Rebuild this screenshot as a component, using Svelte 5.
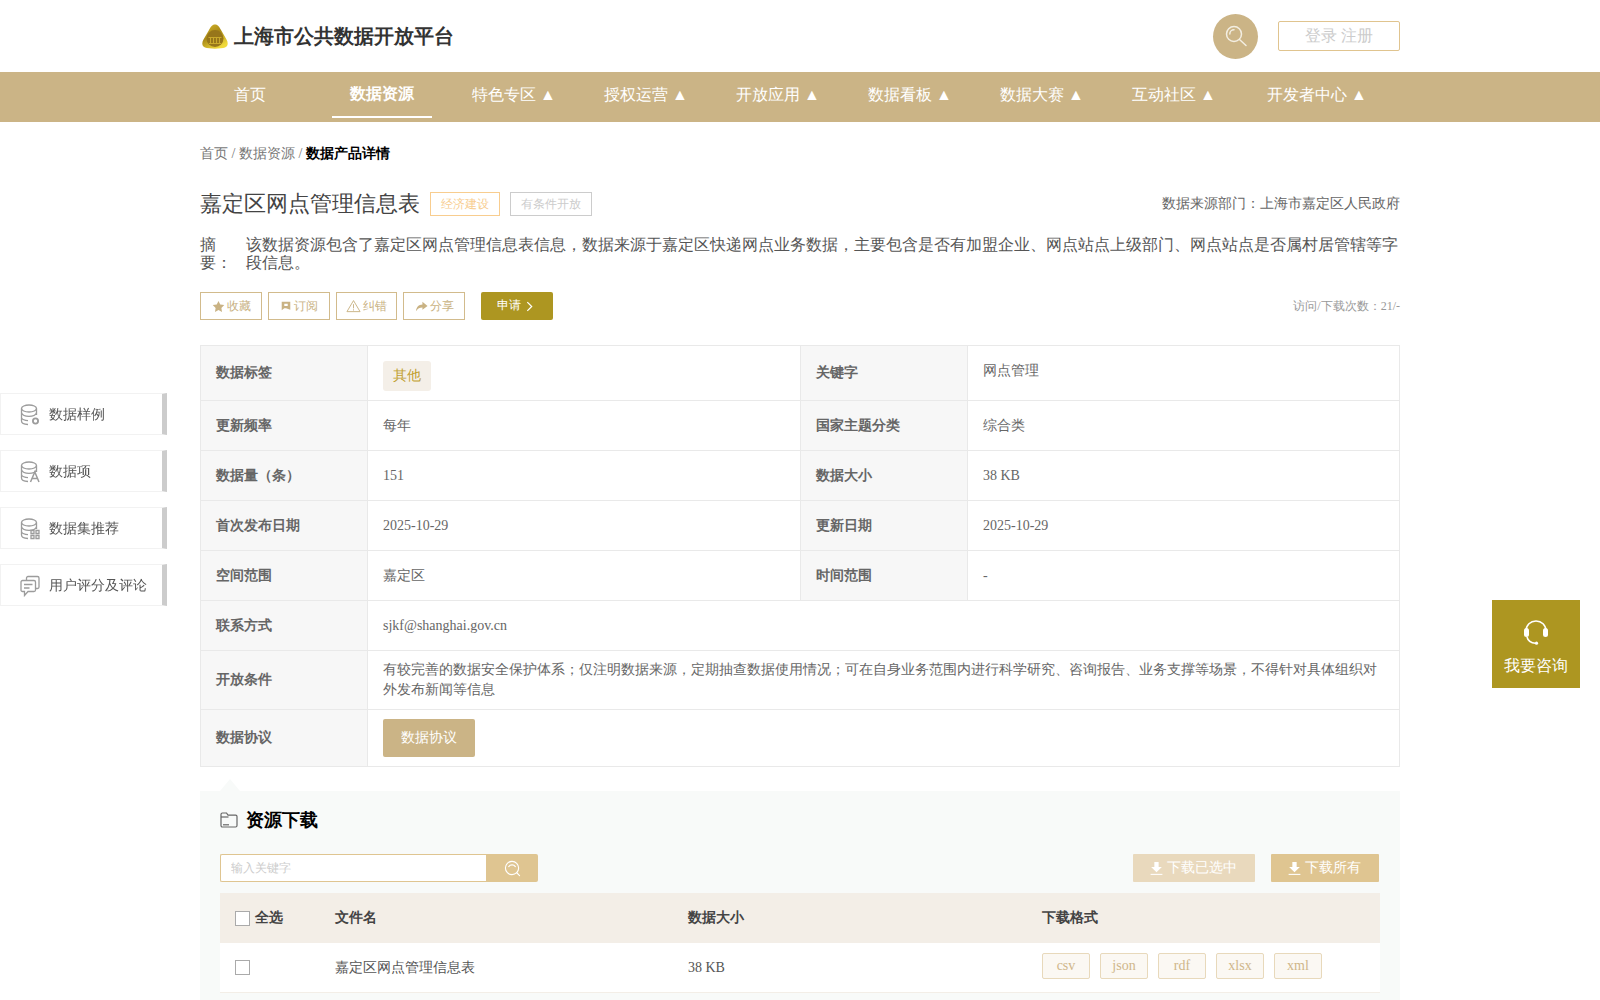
<script>
  const navItems = [
    { label: '首页' },
    { label: '数据资源', active: true },
    { label: '特色专区 ▲' },
    { label: '授权运营 ▲' },
    { label: '开放应用 ▲' },
    { label: '数据看板 ▲' },
    { label: '数据大赛 ▲' },
    { label: '互动社区 ▲' },
    { label: '开发者中心 ▲', wide: true }
  ]
  const sideItems = ['数据样例', '数据项', '数据集推荐', '用户评分及评论']
  const formats = ['csv', 'json', 'rdf', 'xlsx', 'xml']
</script>

<div class="page">
  <header class="top">
    <div class="brand">
      <svg class="logo" viewBox="0 0 26 25" width="26" height="25">
        <defs>
          <linearGradient id="rim" x1="0" y1="0" x2="0.6" y2="1">
            <stop offset="0" stop-color="#d9b92c" />
            <stop offset="0.5" stop-color="#a98a18" />
            <stop offset="1" stop-color="#f0d93a" />
          </linearGradient>
        </defs>
        <path d="M13 .5C16 .5 17.5 3 19 6L24.5 15.5C26.5 19 26 22 23 23.5C19 25 7 25 3 23.5C0 22-.5 19 1.5 15.5L7 6C8.5 3 10 .5 13 .5Z" fill="url(#rim)" />
        <circle cx="13" cy="14.5" r="8.5" fill="#97761a" />
        <path d="M6.5 13.5H19.5M7 19.5H19M8.5 14V19M11.5 14V19M14.5 14V19M17.5 14V19" fill="none" stroke="#c9a92c" stroke-width="1" />
      </svg>
      <span>上海市公共数据开放平台</span>
    </div>
    <div class="top-right">
      <div class="search-circle">
        <svg viewBox="0 0 24 24" width="24" height="24" fill="none" stroke="#f3eee2" stroke-width="1.5" stroke-linecap="round">
          <circle cx="10" cy="10" r="7.5" />
          <path d="M5.8 10A4.2 4.2 0 0 1 10 5.8" />
          <path d="M15.5 15.5L22 21.5" />
        </svg>
      </div>
      <button class="login">登录 注册</button>
    </div>
  </header>

  <nav class="nav">
    <div class="nav-inner">
      {#each navItems as item}
        <a class="nav-item" class:active={item.active} class:wide={item.wide} href="#top">{item.label}</a>
      {/each}
    </div>
  </nav>

  <main class="main">
    <div class="crumbs">首页 / 数据资源 / <b>数据产品详情</b></div>

    <div class="title-row">
      <h1>嘉定区网点管理信息表</h1>
      <span class="tag tag-orange">经济建设</span>
      <span class="tag tag-gray">有条件开放</span>
      <span class="source">数据来源部门：上海市嘉定区人民政府</span>
    </div>

    <div class="summary">
      <div class="summary-label">摘要：</div>
      <div class="summary-text">该数据资源包含了嘉定区网点管理信息表信息，数据来源于嘉定区快递网点业务数据，主要包含是否有加盟企业、网点站点上级部门、网点站点是否属村居管辖等字段信息。</div>
    </div>

    <div class="actions">
      <button class="act">
        <svg viewBox="0 0 14 14" width="13" height="13"><path d="M7 1L8.9 4.9L13.2 5.5L10.1 8.5L10.8 12.8L7 10.8L3.2 12.8L3.9 8.5L.8 5.5L5.1 4.9Z" fill="#c9b283" /></svg>
        收藏
      </button>
      <button class="act">
        <svg viewBox="0 0 14 14" width="12" height="12"><path d="M2 2H12V11.5L7 9.5H5L2 12Z M5 4.5V7H9V4.5Z" fill="#c9b283" fill-rule="evenodd" /></svg>
        订阅
      </button>
      <button class="act narrow">
        <svg viewBox="0 0 16 14" width="15" height="14" fill="none" stroke="#c9b283"><path d="M8 1.2L15 13H1Z" /><path d="M8 5V9.5M8 10.5V11.8" /></svg>纠错
      </button>
      <button class="act">
        <svg viewBox="0 0 14 14" width="13" height="13"><path d="M8 2L13.5 6.5L8 10.5V8C5 8 3 9 1 12C1.5 7.5 4 5 8 4.8Z" fill="#c9b283" /></svg>
        分享
      </button>
      <button class="apply">
        <span>申请</span>
        <svg viewBox="0 0 8 12" width="7" height="11" fill="none" stroke="#fff" stroke-width="1.4"><path d="M1.5 1L6.5 6L1.5 11" /></svg>
      </button>
      <span class="counts">访问/下载次数：21/-</span>
    </div>

    <table class="info">
      <colgroup>
        <col style="width:167px" />
        <col style="width:433px" />
        <col style="width:167px" />
        <col />
      </colgroup>
      <tbody>
        <tr class="r55">
          <th>数据标签</th>
          <td><span class="chip">其他</span></td>
          <th>关键字</th>
          <td class="kw">网点管理</td>
        </tr>
        <tr>
          <th>更新频率</th>
          <td>每年</td>
          <th>国家主题分类</th>
          <td>综合类</td>
        </tr>
        <tr>
          <th>数据量（条）</th>
          <td>151</td>
          <th>数据大小</th>
          <td>38 KB</td>
        </tr>
        <tr>
          <th>首次发布日期</th>
          <td>2025-10-29</td>
          <th>更新日期</th>
          <td>2025-10-29</td>
        </tr>
        <tr>
          <th>空间范围</th>
          <td>嘉定区</td>
          <th>时间范围</th>
          <td>-</td>
        </tr>
        <tr>
          <th>联系方式</th>
          <td colspan="3">sjkf@shanghai.gov.cn</td>
        </tr>
        <tr class="r59">
          <th>开放条件</th>
          <td colspan="3" class="cond">有较完善的数据安全保护体系；仅注明数据来源，定期抽查数据使用情况；可在自身业务范围内进行科学研究、咨询报告、业务支撑等场景，不得针对具体组织对外发布新闻等信息</td>
        </tr>
        <tr class="r57">
          <th>数据协议</th>
          <td colspan="3"><button class="protocol">数据协议</button></td>
        </tr>
      </tbody>
    </table>

    <section class="resource">
      <span class="caret"></span>
      <h2>
        <svg viewBox="0 0 18 16" width="18" height="16" fill="none" stroke="#666" stroke-width="1.2"><path d="M1 13.5V2.5C1 1.7 1.6 1 2.4 1H6.5L8 3.2H15.6C16.4 3.2 17 3.8 17 4.6V13.5C17 14.3 16.4 15 15.6 15H2.4C1.6 15 1 14.3 1 13.5Z" /><path d="M1 5H8.5" /><path d="M3 12.8H9" /></svg>
        资源下载
      </h2>

      <div class="tools">
        <div class="search">
          <input type="text" placeholder="输入关键字" />
          <button aria-label="搜索">
            <svg viewBox="0 0 18 18" width="17" height="17" fill="none" stroke="#fff" stroke-width="1.2" stroke-linecap="round"><circle cx="8.5" cy="8.5" r="7" /><path d="M5 7C5.8 5.8 7 5.2 8.5 5.2C10 5.2 11.2 5.8 12 7" /><path d="M13.5 13.5L16.5 16.5" /></svg>
          </button>
        </div>
        <div class="dl-btns">
          <button class="dl dl-off">
            <svg viewBox="0 0 12 14" width="13" height="15" fill="#fff"><path d="M4 1H8V5.5H11L6 10.5L1 5.5H4Z" /><path d="M0.5 12H11.5V13H0.5Z" /></svg>
            下载已选中
          </button>
          <button class="dl dl-on">
            <svg viewBox="0 0 12 14" width="13" height="15" fill="#fff"><path d="M4 1H8V5.5H11L6 10.5L1 5.5H4Z" /><path d="M0.5 12H11.5V13H0.5Z" /></svg>
            下载所有
          </button>
        </div>
      </div>

      <div class="grid-row grid-head">
        <div class="check-cell"><span class="box"></span>全选</div>
        <div>文件名</div>
        <div>数据大小</div>
        <div>下载格式</div>
      </div>
      <div class="grid-row grid-body">
        <div class="check-cell"><span class="box"></span></div>
        <div>嘉定区网点管理信息表</div>
        <div>38 KB</div>
        <div class="formats">
          {#each formats as f}
            <span class="fmt">{f}</span>
          {/each}
        </div>
      </div>
    </section>
  </main>

  <aside class="side">
    {#each sideItems as label, i}
      <div class="side-item">
        <svg viewBox="0 0 20 22" width="20" height="22" fill="none" stroke="#9c9c9c" stroke-width="1.3">
          {#if i < 3}
            <ellipse cx="9" cy="4.5" rx="7.5" ry="3.5" />
            <path d="M1.5 4.5V17C1.5 19 4 20.3 8 20.5" />
            <path d="M16.5 4.5V11" />
            <path d="M1.5 9C2.5 11.5 5.5 12.3 9 12.3C12.5 12.3 15.5 11.5 16.5 9" />
            <path d="M1.5 14C2.5 15.8 5 16.5 8 16.6" />
          {/if}
          {#if i === 0}
            <circle cx="15.5" cy="17" r="2.6" stroke-width="1.8" />
          {:else if i === 1}
            <path d="M10.5 21L14.8 11L19 21M12 17.5H17.6" stroke-width="1.5" />
          {:else if i === 2}
            <path d="M11 12.5H14V15.5H11ZM16 12.5H19V15.5H16ZM11 17.5H14V20.5H11ZM16 17.5H19V20.5H16Z" />
          {:else}
            <path d="M6.5 5.5V3C6.5 2 7.2 1.5 8 1.5H17.5C18.3 1.5 19 2 19 3V12C19 13 18.3 13.5 17.5 13.5H15.5" />
            <path d="M2.5 5.5H14C14.8 5.5 15.5 6 15.5 7V15C15.5 16 14.8 16.5 14 16.5H8L4.5 20.5V16.5H2.5C1.7 16.5 1 16 1 15V7C1 6 1.7 5.5 2.5 5.5Z" />
            <path d="M4 9.5H12.5M4 13H9.5" />
          {/if}
        </svg>
        <span>{label}</span>
      </div>
    {/each}
  </aside>

  <div class="consult">
    <svg viewBox="0 0 28 28" width="28" height="28" fill="none" stroke="#fff" stroke-width="1.6">
      <path d="M4 13C4 7 8.5 3 14 3C19.5 3 24 7 24 13" />
      <rect x="2" y="10" width="5" height="9" rx="2.5" fill="#fff" stroke="none" />
      <rect x="21" y="10" width="5" height="9" rx="2.5" fill="#fff" stroke="none" />
      <path d="M5 19C6 23 9 25 13.5 25.2" />
      <circle cx="14.5" cy="25.2" r="1.6" fill="#fff" stroke="none" />
    </svg>
    <span>我要咨询</span>
  </div>
</div>

<style>
  :global(body) {
    margin: 0;
    background: #fff;
    font-family: "Liberation Serif", serif;
    color: #666;
  }

  .page {
    height: 100vh;
    overflow: hidden;
  }

  button {
    font-family: inherit;
    cursor: pointer;
  }

  .top {
    width: 1200px;
    height: 72px;
    margin: 0 auto;
    display: flex;
    align-items: center;
    justify-content: space-between;
  }

  .brand {
    display: flex;
    align-items: center;
    gap: 6px;
    padding-left: 2px;
    font-size: 20px;
    font-weight: 700;
    color: #333;
  }

  .top-right {
    display: flex;
    align-items: center;
    gap: 20px;
  }

  .search-circle {
    width: 45px;
    height: 45px;
    border-radius: 50%;
    background: #cbb486;
    display: flex;
    align-items: center;
    justify-content: center;
  }

  .login {
    width: 122px;
    height: 30px;
    border: 1px solid #e0c48f;
    border-radius: 2px;
    background: #fff;
    color: #ccc;
    font-size: 16px;
    padding: 0;
  }

  .nav {
    height: 50px;
    background: #cbb486;
  }

  .nav-inner {
    width: 1200px;
    margin: 0 auto;
    display: flex;
    gap: 32px;
  }

  .nav-item {
    width: 100px;
    height: 46px;
    line-height: 46px;
    text-align: center;
    white-space: nowrap;
    font-size: 16px;
    color: #fff;
    text-decoration: none;
  }

  .nav-item.wide {
    width: 122px;
  }

  .nav-item.active {
    box-sizing: border-box;
    font-weight: 700;
    border-bottom: 2px solid #fff;
    line-height: 44px;
  }

  .main {
    width: 1200px;
    margin: 0 auto;
  }

  .crumbs {
    margin-top: 23px;
    height: 18px;
    line-height: 18px;
    font-size: 14px;
    color: #777;
  }

  .crumbs b {
    color: #000;
  }

  .title-row {
    display: flex;
    align-items: center;
    margin-top: 26px;
    height: 30px;
  }

  h1 {
    margin: 0 10px 0 0;
    font-size: 22px;
    font-weight: 400;
    color: #444;
  }

  .tag {
    height: 24px;
    line-height: 22px;
    box-sizing: border-box;
    padding: 0 10px;
    font-size: 12px;
    border: 1px solid;
    margin-right: 10px;
  }

  .tag-orange {
    color: #f8cd8f;
    border-color: #f8cd8f;
  }

  .tag-gray {
    color: #ccc;
    border-color: #ccc;
  }

  .source {
    margin-left: auto;
    font-size: 14px;
    color: #666;
  }

  .summary {
    display: flex;
    gap: 14px;
    margin-top: 17px;
    font-size: 16px;
    line-height: 18px;
    color: #555;
  }

  .summary-label {
    flex: 0 0 32px;
  }

  .summary-text {
    flex: 1;
  }

  .actions {
    display: flex;
    align-items: center;
    gap: 6px;
    margin-top: 20px;
  }

  .act {
    height: 28px;
    width: 62px;
    padding: 0;
    border: 1px solid #d2bb8c;
    background: #fff;
    color: #c9b283;
    font-size: 12px;
    display: flex;
    align-items: center;
    justify-content: center;
    gap: 2px;
  }

  .act.narrow {
    width: 61px;
  }

  .apply {
    margin-left: 10px;
    width: 72px;
    height: 28px;
    padding: 0 0 0 16px;
    border: 0;
    border-radius: 2px;
    background: #ad9621;
    color: #fff;
    font-size: 12px;
    display: flex;
    align-items: center;
    gap: 5px;
  }

  .apply span {
    margin-bottom: 2px;
  }

  .counts {
    margin-left: auto;
    font-size: 12px;
    color: #999;
  }

  .info {
    width: 100%;
    margin-top: 25px;
    table-layout: fixed;
    border-collapse: collapse;
    font-size: 14px;
  }

  .info th,
  .info td {
    height: 50px;
    padding: 0 15px;
    box-sizing: border-box;
    border: 1px solid #e9e9e9;
    text-align: left;
    color: #666;
    font-size: 14px;
  }

  .info th {
    background: #f7f7f7;
  }

  .info .r55 th,
  .info .r55 td {
    height: 55px;
  }

  .info .r59 th,
  .info .r59 td {
    height: 59px;
  }

  .info .r57 th,
  .info .r57 td {
    height: 57px;
  }

  .info .kw {
    padding-bottom: 5px;
  }

  .cond {
    line-height: 20px;
  }

  .chip {
    display: inline-block;
    width: 48px;
    height: 30px;
    line-height: 30px;
    margin-top: 5px;
    text-align: center;
    border-radius: 3px;
    background: #f4efe8;
    color: #c0a02f;
  }

  .protocol {
    display: block;
    width: 92px;
    height: 38px;
    padding: 0;
    border: 0;
    border-radius: 2px;
    background: #cbb486;
    color: #fff;
    font-size: 14px;
  }

  .resource {
    position: relative;
    margin-top: 24px;
    padding: 20px 20px 40px;
    min-height: 300px;
    background: #f8faf9;
  }

  .caret {
    position: absolute;
    left: 20px;
    top: -12px;
    width: 0;
    height: 0;
    border-left: 10px solid transparent;
    border-right: 10px solid transparent;
    border-bottom: 12px solid #f8faf9;
  }

  h2 {
    margin: 0;
    height: 18px;
    line-height: 18px;
    display: flex;
    align-items: center;
    gap: 8px;
    font-size: 18px;
    font-weight: 700;
    color: #000;
  }

  .tools {
    display: flex;
    justify-content: space-between;
    margin-top: 25px;
  }

  .search {
    display: flex;
    width: 318px;
    height: 28px;
  }

  .search input {
    flex: 1;
    min-width: 0;
    box-sizing: border-box;
    height: 28px;
    padding: 0 10px;
    border: 1px solid #dfc591;
    border-right: 0;
    border-radius: 2px 0 0 2px;
    outline: 0;
    background: #fff;
    font-family: inherit;
    font-size: 12px;
  }

  .search input::placeholder {
    color: #ccc;
  }

  .search button {
    flex: 0 0 52px;
    height: 28px;
    padding: 0;
    border: 0;
    border-radius: 0 2px 2px 0;
    background: #dfc591;
    display: flex;
    align-items: center;
    justify-content: center;
  }

  .dl-btns {
    display: flex;
    gap: 16px;
    padding-right: 1px;
  }

  .dl {
    height: 28px;
    padding: 0 2px 0 0;
    border: 0;
    border-radius: 1px;
    color: #fff;
    font-size: 14px;
    display: flex;
    align-items: center;
    justify-content: center;
    gap: 4px;
  }

  .dl-off {
    width: 122px;
    background: #e9d9bd;
  }

  .dl-on {
    width: 108px;
    background: #dfc591;
  }

  .grid-row {
    display: grid;
    grid-template-columns: 115px 353px 354px 1fr;
    align-items: center;
    font-size: 14px;
  }

  .grid-head {
    height: 50px;
    margin-top: 11px;
    background: #f3eee7;
    font-weight: 700;
    color: #444;
  }

  .grid-body {
    height: 50px;
    box-sizing: border-box;
    background: #fff;
    border-bottom: 1px solid #f3eee7;
    color: #555;
  }

  .check-cell {
    display: flex;
    align-items: center;
    gap: 5px;
    padding-left: 15px;
  }

  .box {
    width: 15px;
    height: 15px;
    box-sizing: border-box;
    border: 1px solid #aaa;
    background: #fff;
  }

  .formats {
    display: flex;
    gap: 10px;
    margin-bottom: 4px;
  }

  .fmt {
    width: 48px;
    height: 26px;
    line-height: 24px;
    box-sizing: border-box;
    text-align: center;
    border: 1px solid #e8d9bb;
    border-radius: 2px;
    background: #fbf8f3;
    color: #cfb68a;
  }

  .side {
    position: fixed;
    left: 0;
    top: 393px;
    width: 167px;
    display: flex;
    flex-direction: column;
    gap: 15px;
  }

  .side-item {
    height: 42px;
    box-sizing: border-box;
    display: flex;
    align-items: center;
    gap: 9px;
    padding: 2px 0 0 19px;
    background: #fff;
    border: 1px solid #f2f2f2;
    border-right: 5px solid #ccc;
    font-size: 14px;
    color: #555;
  }

  .consult {
    position: fixed;
    left: 1492px;
    top: 600px;
    width: 88px;
    height: 88px;
    box-sizing: border-box;
    padding-top: 7px;
    background: #ad9621;
    color: #fff;
    font-size: 16px;
    display: flex;
    flex-direction: column;
    align-items: center;
    justify-content: center;
    gap: 10px;
  }
</style>
